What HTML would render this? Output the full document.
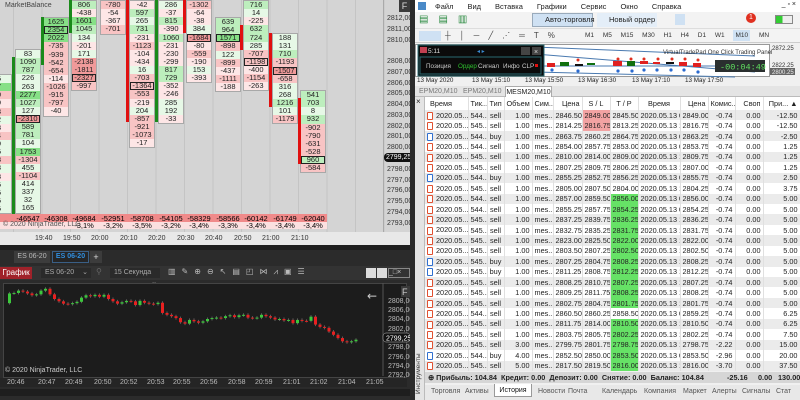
<!DOCTYPE html>
<html><head><meta charset="utf-8">
<style>
*{margin:0;padding:0;box-sizing:border-box}
body{width:800px;height:400px;overflow:hidden;background:#2b2b2b;font-family:"Liberation Sans",sans-serif;position:relative}
.a{position:absolute}
#fp{left:0;top:0;width:410px;height:245px;background:#d4d4d4;overflow:hidden;
background-image:repeating-linear-gradient(90deg,transparent 0,transparent 13px,#c4c4c4 13px,#c4c4c4 14px,transparent 14px,transparent 28.5px)}
.col{position:absolute;width:26px;border:1px solid #a8a8a8;font-size:7.5px;color:#222}
.col i{display:block;height:8.13px;line-height:8px;font-style:normal;text-align:center;white-space:nowrap;overflow:hidden}
.g3{background:#86e086}.g2{background:#bdeebd}.g1{background:#e6f8e6}
.r3{background:#f09a9a}.r2{background:#f8c4c4}.r1{background:#fde6e6}
.col i.b{outline:1.5px solid #222;outline-offset:-1.5px}
.bar{position:absolute;width:3px}
.pl{position:absolute;left:387px;font-size:7px;color:#333}
.tl{position:absolute;top:235px;font-size:7px;color:#333}
.sr{position:absolute;font-size:7.5px;text-align:center;width:28px}
#rt{left:415px;top:0;width:385px;height:400px;background:#f0f0f0;font-size:7.5px;color:#222}
table{border-collapse:collapse;table-layout:fixed;font-size:7.3px}
td{height:10.45px;padding:0 2px;white-space:nowrap;overflow:hidden;text-align:right;border-right:1px solid #e0e0e0}
tr:nth-child(odd) td{background:#fff}
tr:nth-child(even) td{background:#ebebeb}
td.l{text-align:left}
td.c{text-align:center}
td.gs{background:#66e266!important}
td.rs{background:#f2a2a2!important}
.ic{display:inline-block;width:6px;height:8px;border:1px solid #e05030;border-radius:1px;vertical-align:middle;margin-right:3px;background:#fff}
.ic.bu{border-color:#3070d0}
.mn span{margin-right:14px}
.tb{position:absolute;font-size:7px;color:#333}
.nw{white-space:nowrap}
</style></head><body>

<div id="fp" class="a">
<div class="a" style="left:5px;top:2px;font-size:7px;color:#444">MarketBalance</div>
<div class="a" style="left:399px;top:0;width:11px;height:12px;background:#3a3a3a;color:#ddd;font-size:9px;text-align:center;line-height:12px">F</div>
<div class="a" style="left:383px;top:0;width:1px;height:232px;background:#aaa"></div>

<div class="col" style="left:-14px;top:74px"><i class="g1">5</i><i class="g3">7</i><i class="r2">0</i><i class="r1">9</i><i class="r2">3</i><i class="g1">2</i><i class="r1">8</i><i class="r2">4</i><i class="g1">9</i><i class="g1">5</i><i class="r2">8</i><i class="g1">3</i><i class="r1">8</i><i class="g1">5</i><i class="g1">5</i><i class="g1">5</i><i class="g1">5</i></div>

<div class="col" style="left:15px;top:49px"><i class="g1">83</i><i class="g2">1090</i><i class="g2">787</i><i class="g1">226</i><i class="g1">263</i><i class="g3">2277</i><i class="g2">1027</i><i class="g1">127</i><i class="r3 b">-2310</i><i class="g2">589</i><i class="g2">781</i><i class="g1">104</i><i class="g3">1753</i><i class="r2">-1304</i><i class="g1">455</i><i class="r2">-1104</i><i class="g1">414</i><i class="g1">337</i><i class="g1">32</i><i class="g1">165</i></div>
<div class="col" style="left:43px;top:17px"><i class="g3">1625</i><i class="g3 b">2354</i><i class="g3">2022</i><i class="r2">-735</i><i class="r2">-939</i><i class="r2">-542</i><i class="r2">-654</i><i class="r1">-114</i><i class="r2">-1026</i><i class="r2">-915</i><i class="r2">-797</i><i class="r1">-40</i></div>
<div class="col" style="left:71px;top:0px"><i class="g2">806</i><i class="r1">-438</i><i class="g3">1601</i><i class="g2">1045</i><i class="g1">134</i><i class="r1">-201</i><i class="g1">171</i><i class="r3">-2138</i><i class="r3">-1811</i><i class="r3 b">-2327</i><i class="r2">-997</i></div>
<div class="col" style="left:100px;top:0px"><i class="r2">-780</i><i class="r1">-54</i><i class="r1">-367</i><i class="r2">-701</i></div>
<div class="col" style="left:129px;top:0px"><i class="r1">-42</i><i class="g2">597</i><i class="g1">265</i><i class="g2">731</i><i class="r1">-231</i><i class="r2">-1123</i><i class="r1">-104</i><i class="r1">-434</i><i class="g1">16</i><i class="r2">-703</i><i class="r2 b">-1364</i><i class="r2">-553</i><i class="r1">-219</i><i class="g1">204</i><i class="r2">-857</i><i class="r2">-921</i><i class="r2">-1073</i><i class="r1">-17</i></div>
<div class="col" style="left:158px;top:0px"><i class="g1">286</i><i class="r1">-37</i><i class="g2">815</i><i class="r1">-390</i><i class="g2">1060</i><i class="r1">-231</i><i class="r1">-230</i><i class="r1">-299</i><i class="g2">817</i><i class="g2">729</i><i class="r1">-352</i><i class="r1">-246</i><i class="g1">285</i><i class="g1">192</i><i class="r1">-33</i></div>
<div class="col" style="left:186px;top:0px"><i class="r2">-1302</i><i class="r1">-64</i><i class="r1">-38</i><i class="g1">384</i><i class="r3 b">-1684</i><i class="r1">-80</i><i class="r2">-559</i><i class="r1">-190</i><i class="g1">153</i><i class="r1">-393</i></div>
<div class="col" style="left:215px;top:17px"><i class="g2">639</i><i class="g2">964</i><i class="g3 b">1571</i><i class="r2">-898</i><i class="g1">122</i><i class="r2">-899</i><i class="r1">-437</i><i class="r2">-1111</i><i class="r1">-188</i></div>
<div class="col" style="left:243px;top:0px"><i class="g2">716</i><i class="g1">14</i><i class="r1">-225</i><i class="g2">632</i><i class="g2">724</i><i class="g1">285</i><i class="r2">-707</i><i class="r2 b">-1198</i><i class="r1">-400</i><i class="r2">-1154</i><i class="r1">-263</i></div>
<div class="col" style="left:272px;top:33px"><i class="g1">188</i><i class="g1">131</i><i class="g2">710</i><i class="r2">-1193</i><i class="r3 b">-1507</i><i class="r2">-658</i><i class="g1">316</i><i class="g1">268</i><i class="g2">1216</i><i class="g1">101</i><i class="r2">-1179</i></div>
<div class="col" style="left:300px;top:90px"><i class="g2">541</i><i class="g2">703</i><i class="g1">8</i><i class="g2">932</i><i class="r2">-902</i><i class="r2">-790</i><i class="r2">-631</i><i class="r2">-528</i><i class="g2 b">960</i><i class="r2">-584</i></div>

<div class="bar" style="left:12px;top:57px;height:157px;background:#1a8a1a"></div>
<div class="bar" style="left:41px;top:17px;height:48px;background:#1a8a1a"></div>
<div class="bar" style="left:69px;top:0;height:33px;background:#1a8a1a"></div>
<div class="bar" style="left:126px;top:0;height:122px;background:#e01010"></div>
<div class="bar" style="left:155px;top:0;height:122px;background:#1a8a1a"></div>
<div class="bar" style="left:183px;top:0;height:33px;background:#e01010"></div>
<div class="bar" style="left:240px;top:25px;height:25px;background:#e01010"></div>
<div class="bar" style="left:269px;top:33px;height:74px;background:#e01010"></div>
<div class="bar" style="left:298px;top:98px;height:66px;background:#e01010"></div>

<div class="a" style="left:0;top:214px;width:327px;height:8px;background:#f08a8a"></div>
<div class="a" style="left:0;top:222px;width:327px;height:7px;background:#fbe0e0"></div>
<div class="sr" style="left:14px;top:214px">-46547</div><div class="sr" style="left:42px;top:214px">-46308</div><div class="sr" style="left:70px;top:214px">-49684</div><div class="sr" style="left:99px;top:214px">-52951</div><div class="sr" style="left:128px;top:214px">-58708</div><div class="sr" style="left:157px;top:214px">-54105</div><div class="sr" style="left:185px;top:214px">-58329</div><div class="sr" style="left:214px;top:214px">-58566</div><div class="sr" style="left:242px;top:214px">-60142</div><div class="sr" style="left:271px;top:214px">-61749</div><div class="sr" style="left:299px;top:214px">-62040</div>
<div class="sr" style="left:70px;top:221px">-3,1%</div><div class="sr" style="left:99px;top:221px">-3,2%</div><div class="sr" style="left:128px;top:221px">-3,5%</div><div class="sr" style="left:157px;top:221px">-3,2%</div><div class="sr" style="left:185px;top:221px">-3,4%</div><div class="sr" style="left:214px;top:221px">-3,3%</div><div class="sr" style="left:242px;top:221px">-3,4%</div><div class="sr" style="left:271px;top:221px">-3,4%</div><div class="sr" style="left:299px;top:221px">-3,4%</div>
<div class="a" style="left:3px;top:221px;font-size:7px;color:#555">© 2020 NinjaTrader, LLC</div>

<div class="pl" style="top:15px">2812,00</div><div class="pl" style="top:26px">2811,00</div><div class="pl" style="top:37px">2810,00</div><div class="pl" style="top:58px">2808,00</div><div class="pl" style="top:69px">2807,00</div><div class="pl" style="top:80px">2806,00</div><div class="pl" style="top:90px">2805,00</div><div class="pl" style="top:101px">2804,00</div><div class="pl" style="top:112px">2803,00</div><div class="pl" style="top:123px">2802,00</div><div class="pl" style="top:133px">2801,00</div><div class="pl" style="top:144px">2800,00</div><div class="pl" style="top:166px">2798,00</div><div class="pl" style="top:177px">2797,00</div><div class="pl" style="top:187px">2796,00</div><div class="pl" style="top:198px">2795,00</div><div class="pl" style="top:209px">2794,00</div><div class="pl" style="top:220px">2793,00</div>
<div class="a" style="left:384px;top:153px;width:26px;height:9px;background:#111;color:#fff;font-size:7px;line-height:9px;padding-left:2px;border-radius:4px 0 0 4px">2799,25</div>
<div class="a" style="left:0;top:232px;width:410px;height:13px;background:#e8e8e8"></div>
<div class="tl" style="left:35px">19:40</div><div class="tl" style="left:63px">19:50</div><div class="tl" style="left:91px">20:00</div><div class="tl" style="left:120px">20:10</div><div class="tl" style="left:148px">20:20</div><div class="tl" style="left:177px">20:30</div><div class="tl" style="left:205px">20:40</div><div class="tl" style="left:234px">20:50</div><div class="tl" style="left:262px">21:00</div><div class="tl" style="left:291px">21:10</div>
</div>

<div class="a" style="left:0;top:245px;width:410px;height:5px;background:#1e1e1e"></div>
<div class="a" style="left:14px;top:251px;width:36px;height:12px;background:#3c3c3c;color:#bbb;font-size:7px;line-height:12px;text-align:center">ES 06-20</div>
<div class="a" style="left:52px;top:251px;width:37px;height:12px;background:#252526;border:1px solid #3a5f86;color:#2f8ee0;font-size:7px;line-height:10px;text-align:center;font-weight:bold">ES 06-20</div>
<div class="a" style="left:90px;top:251px;width:12px;height:12px;background:#3c3c3c;color:#ddd;font-size:9px;line-height:12px;text-align:center">+</div>
<div class="a" style="left:0;top:266px;width:410px;height:14px;background:#333"></div>
<div class="a" style="left:0;top:267px;width:32px;height:12px;background:#a0222a;color:#fff;font-size:8px;line-height:12px;text-align:center">График</div>
<div class="a nw" style="left:41px;top:268px;width:50px;height:10px;background:#2a2a2a;color:#aaa;font-size:7px;line-height:10px;padding-left:4px">ES 06-20 <span style="float:right;margin-right:3px">⌄</span></div>
<div class="a" style="left:96px;top:267px;color:#666;font-size:8px">⚲</div>
<div class="a nw" style="left:110px;top:268px;width:50px;height:10px;background:#2a2a2a;color:#aaa;font-size:7px;line-height:10px;padding-left:4px">15 Секунда <span style="float:right;margin-right:3px">⌄</span></div>
<div class="a nw" style="left:168px;top:267px;color:#bbb;font-size:8px;letter-spacing:6px">▥✎⊕⊖↖▤◰⋈⩘▣☰</div>
<div class="a" style="left:366px;top:268px;width:10px;height:10px;background:#ddd"></div>
<div class="a" style="left:377px;top:268px;width:10px;height:10px;background:#ddd"></div>
<div class="a" style="left:388px;top:268px;width:22px;height:10px;color:#ccc;font-size:7px;border:1px solid #888">_□×</div>
<div class="a" style="left:3px;top:283px;width:404px;height:95px;background:#1c1c1c;border:1px solid #444"></div>
<svg class="a" style="left:0;top:283px" width="410" height="100" id="cs">
<line x1="383" y1="0" x2="383" y2="93" stroke="#555"/>
<g fill="#bbb" font-size="7" font-family="Liberation Sans">
<text x="388" y="20">2808,00</text><text x="388" y="29">2806,00</text><text x="388" y="38">2804,00</text><text x="388" y="48">2802,00</text><text x="388" y="66">2798,00</text><text x="388" y="76">2796,00</text><text x="388" y="85">2794,00</text><text x="388" y="94">2792,00</text>
<text x="5" y="89" fill="#ccc">© 2020 NinjaTrader, LLC</text>
</g>
<rect x="401" y="3" width="9" height="11" fill="#3a3a3a"/><text x="402" y="12" fill="#ccc" font-size="9" font-family="Liberation Sans">F</text>
<text x="367" y="17" fill="#ccc" font-size="12" font-family="DejaVu Sans">←</text>
<rect x="383" y="50" width="27" height="9" rx="3" fill="#111" stroke="#bbb" stroke-width=".5"/><text x="386" y="57.5" fill="#fff" font-size="7" font-family="Liberation Sans">2799,25</text>
</svg>
<div class="a" style="left:0;top:378px;width:407px;height:9px;background:#252525;color:#bbb;font-size:7px">
<span class="a" style="left:7px;top:1px">20:46</span><span class="a" style="left:38px;top:1px">20:47</span><span class="a" style="left:65px;top:1px">20:49</span><span class="a" style="left:94px;top:1px">20:50</span><span class="a" style="left:120px;top:1px">20:52</span><span class="a" style="left:147px;top:1px">20:53</span><span class="a" style="left:173px;top:1px">20:55</span><span class="a" style="left:200px;top:1px">20:56</span><span class="a" style="left:228px;top:1px">20:58</span><span class="a" style="left:255px;top:1px">20:59</span><span class="a" style="left:283px;top:1px">21:01</span><span class="a" style="left:310px;top:1px">21:02</span><span class="a" style="left:338px;top:1px">21:04</span><span class="a" style="left:366px;top:1px">21:05</span></div>
<div class="a" style="left:0;top:389px;width:410px;height:7px;background:#1e1e1e"></div>
<div class="a" style="left:410px;top:0;width:5px;height:400px;background:#2b2b2b"></div>

<div id="rt" class="a">
<div class="a mn nw" style="left:0;top:0;width:385px;height:12px;background:#fff;padding:2px 0 0 20px;font-size:7.5px"><span>Файл</span><span>Вид</span><span>Вставка</span><span>Графики</span><span>Сервис</span><span>Окно</span><span>Справка</span><b style="position:absolute;right:4px;top:1px;font-weight:normal;font-size:7px">_ ▫ ×</b></div>
<div class="a" style="left:3px;top:2px;width:8px;height:8px;background:#4a8ac8"></div>
<div class="a" style="left:0;top:12px;width:385px;height:17px;background:#f3f3f3;border-bottom:1px solid #ddd"></div>
<div class="a nw" style="left:4px;top:14px;font-size:10px;color:#2a8a40;letter-spacing:10px">▤▤▥</div>
<div class="a nw" style="left:117px;top:13px;width:61px;height:14px;background:#cfe1f3;border:1px solid #9ab;font-size:7.5px;line-height:12px;padding-left:12px">Авто-торговля</div>
<div class="a nw" style="left:182px;top:13px;width:60px;height:14px;background:#e4eef8;font-size:7.5px;line-height:13px;padding-left:12px">Новый ордер</div>
<div class="a" style="left:260px;top:14px;width:10px;height:11px;background:#cfe1f3"></div>
<div class="a" style="left:331px;top:13px;width:10px;height:10px;border-radius:5px;background:#e03020;color:#fff;font-size:7px;text-align:center;line-height:10px">1</div>
<div class="a" style="left:360px;top:15px;width:18px;height:9px;border:1px solid #888;background:linear-gradient(90deg,#3c3 40%,#eee 40%)"></div>
<div class="a" style="left:0;top:29px;width:385px;height:14px;background:#f3f3f3;border-bottom:1px solid #ccc"></div>
<div class="a" style="left:4px;top:31px;width:22px;height:10px;background:#cfe1f3"></div>
<div class="a nw" style="left:30px;top:31px;font-size:8px;color:#444;letter-spacing:9px">┼│─╱⋰═T%</div>
<div class="a nw" style="left:170px;top:32px;font-size:6.5px;color:#333;word-spacing:7px">M1 M5 M15 M30 H1 H4 D1 W1 <span style="background:#cfe1f3;padding:2px">M10</span> MN</div>
<div class="a" style="left:0;top:44px;width:355px;height:33px;background:#fff;border:1px solid #999"></div>
<svg class="a" style="left:0;top:44px" width="385" height="34">
<line x1="120" y1="3" x2="340" y2="12" stroke="#4a7ab0"/><line x1="120" y1="10" x2="340" y2="28" stroke="#4a7ab0"/><line x1="120" y1="22" x2="340" y2="22" stroke="#4a7ab0"/><line x1="120" y1="28" x2="320" y2="33" stroke="#4a7ab0"/>
<g><rect x="132" y="19" width="8" height="4" fill="#e02020"/><rect x="145" y="18" width="9" height="4" fill="#107010"/><rect x="160" y="20" width="8" height="2" fill="#111"/><rect x="172" y="19" width="8" height="2" fill="#107010"/><rect x="198" y="17" width="9" height="5" fill="#e02020"/><rect x="212" y="17" width="8" height="5" fill="#107010"/><rect x="225" y="17" width="8" height="3" fill="#e02020"/><rect x="238" y="18" width="7" height="2" fill="#e02020"/><rect x="251" y="18" width="8" height="2" fill="#111"/><rect x="264" y="18" width="8" height="4" fill="#e02020"/><rect x="278" y="19" width="8" height="4" fill="#e02020"/>
<g fill="#2a6ad0"><circle cx="137" cy="26" r="1.6"/><circle cx="163" cy="27" r="1.6"/><circle cx="203" cy="27" r="1.6"/><circle cx="217" cy="27" r="1.6"/><circle cx="229" cy="26" r="1.6"/><circle cx="242" cy="26" r="1.6"/><circle cx="256" cy="26" r="1.6"/><circle cx="269" cy="26" r="1.6"/><circle cx="283" cy="28" r="1.6"/></g>
<g fill="#e03020"><circle cx="163" cy="16" r="1.5"/><circle cx="203" cy="15" r="1.5"/><circle cx="216" cy="15" r="1.5"/><circle cx="229" cy="15" r="1.5"/><circle cx="243" cy="15" r="1.5"/><circle cx="257" cy="15" r="1.5"/><circle cx="270" cy="15" r="1.5"/><circle cx="283" cy="16" r="1.5"/></g></g>
<rect x="3" y="1" width="126" height="31" fill="#0b0b0b" stroke="#2a6a70"/>
<rect x="5" y="13" width="121" height="17" fill="none" stroke="#2a6a70"/>
<rect x="5" y="3" width="7" height="6" fill="#c04050"/><text x="13" y="9" fill="#ddd" font-size="6.5" font-family="Liberation Sans">5:11</text>
<text x="62" y="9" fill="#3a8ad0" font-size="6">◂ ▸</text>
<rect x="106" y="3" width="9" height="8" fill="#444"/><rect x="117" y="3" width="9" height="8" fill="#444"/><text x="119" y="10" fill="#ddd" font-size="7">×</text>
<g font-size="6.3" font-family="Liberation Sans" fill="#ccc"><text x="11" y="24">Позиция</text><text x="43" y="24" fill="#2ec02e">Ордер</text><text x="63" y="24">Сигнал</text><text x="88" y="24">Инфо</text><text x="107" y="24">CLP</text></g>
<rect x="120" y="20" width="3" height="3" fill="#e01010"/>
<text x="248" y="10" fill="#333" font-size="6" font-family="Liberation Sans">VirtualTradePad One Click Trading Panel</text>
<rect x="300" y="16" width="50" height="12" fill="#2a2f2f"/><text x="305" y="25.5" fill="#60e060" font-size="8.5" font-family="Liberation Mono">-00:04:49</text>
<g fill="#333" font-size="6" font-family="Liberation Sans"><text x="357" y="6">2872.25</text><text x="357" y="23">2822.25</text></g>
<rect x="355" y="24" width="25" height="7" fill="#666"/><text x="357" y="30" fill="#eee" font-size="6">2800.25</text>
</svg>
<div class="a nw" style="left:0;top:77px;width:385px;height:8px;font-size:6.3px;color:#222">
<span class="a" style="left:2px">13 May 2020</span><span class="a" style="left:57px">13 May 15:10</span><span class="a" style="left:110px">13 May 15:50</span><span class="a" style="left:163px">13 May 16:30</span><span class="a" style="left:217px">13 May 17:10</span><span class="a" style="left:270px">13 May 17:50</span></div>
<div class="a" style="left:0;top:86px;width:385px;height:11px;background:#e4e4e4;border-bottom:1px solid #bbb"></div>
<div class="tb" style="left:4px;top:88px;color:#777">EPM20,M10</div><div class="tb" style="left:48px;top:88px;color:#777">EPM20,M10</div>
<div class="a" style="left:90px;top:86px;width:47px;height:12px;background:#fff;border:1px solid #aaa;border-bottom:none;font-size:7px;line-height:11px;text-align:center">MESM20,M10</div>
<div class="a" style="left:0;top:97px;width:10px;height:303px;background:#e4e4e4;border-right:1px solid #bbb"></div>
<div class="a" style="left:1px;top:97px;font-size:8px">×</div>
<div class="a nw" style="left:0;top:394px;transform-origin:0 0;transform:rotate(-90deg);font-size:6.5px;color:#333">Инструменты</div>
<table class="a" style="left:10px;top:97px;width:375px">
<colgroup><col style="width:43px"><col style="width:19px"><col style="width:17px"><col style="width:28px"><col style="width:21px"><col style="width:29px"><col style="width:28px"><col style="width:28px"><col style="width:42px"><col style="width:28px"><col style="width:27px"><col style="width:28px"><col style="width:37px"></colgroup>
<tbody>
<tr><td class="l" style="height:13px;background:#fff;padding-left:5px">Время</td><td class="l">Тик...</td><td class="l">Тип</td><td>Объем</td><td class="l">Сим...</td><td>Цена</td><td class="c">S / L</td><td class="c">T / P</td><td class="c">Время</td><td>Цена</td><td>Комис...</td><td>Своп</td><td>При... ▲</td></tr>
<tr><td class="l"><span class="ic"></span>2020.05...</td><td class="l">544...</td><td class="c">sell</td><td>1.00</td><td class="l">mes...</td><td>2846.50</td><td class="rs">2849.00</td><td>2845.50</td><td class="l">2020.05.13 0...</td><td>2849.00</td><td>-0.74</td><td>0.00</td><td>-12.50</td></tr>
<tr><td class="l"><span class="ic"></span>2020.05...</td><td class="l">545...</td><td class="c">sell</td><td>1.00</td><td class="l">mes...</td><td>2814.25</td><td class="rs">2816.75</td><td>2813.25</td><td class="l">2020.05.13 1...</td><td>2816.75</td><td>-0.74</td><td>0.00</td><td>-12.50</td></tr>
<tr><td class="l"><span class="ic bu"></span>2020.05...</td><td class="l">544...</td><td class="c">buy</td><td>1.00</td><td class="l">mes...</td><td>2863.75</td><td>2860.25</td><td>2864.75</td><td class="l">2020.05.13 0...</td><td>2863.25</td><td>-0.74</td><td>0.00</td><td>-2.50</td></tr>
<tr><td class="l"><span class="ic"></span>2020.05...</td><td class="l">544...</td><td class="c">sell</td><td>1.00</td><td class="l">mes...</td><td>2854.00</td><td>2857.75</td><td>2853.00</td><td class="l">2020.05.13 0...</td><td>2853.75</td><td>-0.74</td><td>0.00</td><td>1.25</td></tr>
<tr><td class="l"><span class="ic"></span>2020.05...</td><td class="l">545...</td><td class="c">sell</td><td>1.00</td><td class="l">mes...</td><td>2810.00</td><td>2814.00</td><td>2809.00</td><td class="l">2020.05.13 1...</td><td>2809.75</td><td>-0.74</td><td>0.00</td><td>1.25</td></tr>
<tr><td class="l"><span class="ic"></span>2020.05...</td><td class="l">545...</td><td class="c">sell</td><td>1.00</td><td class="l">mes...</td><td>2807.25</td><td>2809.75</td><td>2806.25</td><td class="l">2020.05.13 1...</td><td>2807.00</td><td>-0.74</td><td>0.00</td><td>1.25</td></tr>
<tr><td class="l"><span class="ic bu"></span>2020.05...</td><td class="l">544...</td><td class="c">buy</td><td>1.00</td><td class="l">mes...</td><td>2855.25</td><td>2852.75</td><td>2856.25</td><td class="l">2020.05.13 0...</td><td>2855.75</td><td>-0.74</td><td>0.00</td><td>2.50</td></tr>
<tr><td class="l"><span class="ic"></span>2020.05...</td><td class="l">545...</td><td class="c">sell</td><td>1.00</td><td class="l">mes...</td><td>2805.00</td><td>2807.50</td><td>2804.00</td><td class="l">2020.05.13 1...</td><td>2804.25</td><td>-0.74</td><td>0.00</td><td>3.75</td></tr>
<tr><td class="l"><span class="ic"></span>2020.05...</td><td class="l">544...</td><td class="c">sell</td><td>1.00</td><td class="l">mes...</td><td>2857.00</td><td>2859.50</td><td class="gs">2856.00</td><td class="l">2020.05.13 0...</td><td>2856.00</td><td>-0.74</td><td>0.00</td><td>5.00</td></tr>
<tr><td class="l"><span class="ic"></span>2020.05...</td><td class="l">544...</td><td class="c">sell</td><td>1.00</td><td class="l">mes...</td><td>2855.25</td><td>2857.75</td><td class="gs">2854.25</td><td class="l">2020.05.13 0...</td><td>2854.25</td><td>-0.74</td><td>0.00</td><td>5.00</td></tr>
<tr><td class="l"><span class="ic"></span>2020.05...</td><td class="l">545...</td><td class="c">sell</td><td>1.00</td><td class="l">mes...</td><td>2837.25</td><td>2839.75</td><td class="gs">2836.25</td><td class="l">2020.05.13 1...</td><td>2836.25</td><td>-0.74</td><td>0.00</td><td>5.00</td></tr>
<tr><td class="l"><span class="ic"></span>2020.05...</td><td class="l">545...</td><td class="c">sell</td><td>1.00</td><td class="l">mes...</td><td>2832.75</td><td>2835.25</td><td class="gs">2831.75</td><td class="l">2020.05.13 1...</td><td>2831.75</td><td>-0.74</td><td>0.00</td><td>5.00</td></tr>
<tr><td class="l"><span class="ic"></span>2020.05...</td><td class="l">545...</td><td class="c">sell</td><td>1.00</td><td class="l">mes...</td><td>2823.00</td><td>2825.50</td><td class="gs">2822.00</td><td class="l">2020.05.13 1...</td><td>2822.00</td><td>-0.74</td><td>0.00</td><td>5.00</td></tr>
<tr><td class="l"><span class="ic"></span>2020.05...</td><td class="l">545...</td><td class="c">sell</td><td>1.00</td><td class="l">mes...</td><td>2803.50</td><td>2807.25</td><td class="gs">2802.50</td><td class="l">2020.05.13 1...</td><td>2802.50</td><td>-0.74</td><td>0.00</td><td>5.00</td></tr>
<tr><td class="l"><span class="ic bu"></span>2020.05...</td><td class="l">545...</td><td class="c">buy</td><td>1.00</td><td class="l">mes...</td><td>2807.25</td><td>2804.75</td><td class="gs">2808.25</td><td class="l">2020.05.13 1...</td><td>2808.25</td><td>-0.74</td><td>0.00</td><td>5.00</td></tr>
<tr><td class="l"><span class="ic bu"></span>2020.05...</td><td class="l">545...</td><td class="c">buy</td><td>1.00</td><td class="l">mes...</td><td>2811.25</td><td>2808.75</td><td class="gs">2812.25</td><td class="l">2020.05.13 1...</td><td>2812.25</td><td>-0.74</td><td>0.00</td><td>5.00</td></tr>
<tr><td class="l"><span class="ic"></span>2020.05...</td><td class="l">545...</td><td class="c">sell</td><td>1.00</td><td class="l">mes...</td><td>2808.25</td><td>2810.75</td><td class="gs">2807.25</td><td class="l">2020.05.13 1...</td><td>2807.25</td><td>-0.74</td><td>0.00</td><td>5.00</td></tr>
<tr><td class="l"><span class="ic"></span>2020.05...</td><td class="l">545...</td><td class="c">sell</td><td>1.00</td><td class="l">mes...</td><td>2809.25</td><td>2811.75</td><td class="gs">2808.25</td><td class="l">2020.05.13 1...</td><td>2808.25</td><td>-0.74</td><td>0.00</td><td>5.00</td></tr>
<tr><td class="l"><span class="ic"></span>2020.05...</td><td class="l">545...</td><td class="c">sell</td><td>1.00</td><td class="l">mes...</td><td>2802.75</td><td>2804.75</td><td class="gs">2801.75</td><td class="l">2020.05.13 1...</td><td>2801.75</td><td>-0.74</td><td>0.00</td><td>5.00</td></tr>
<tr><td class="l"><span class="ic"></span>2020.05...</td><td class="l">544...</td><td class="c">sell</td><td>1.00</td><td class="l">mes...</td><td>2860.50</td><td>2860.25</td><td>2858.50</td><td class="l">2020.05.13 0...</td><td>2859.25</td><td>-0.74</td><td>0.00</td><td>6.25</td></tr>
<tr><td class="l"><span class="ic"></span>2020.05...</td><td class="l">545...</td><td class="c">sell</td><td>1.00</td><td class="l">mes...</td><td>2811.75</td><td>2814.00</td><td class="gs">2810.50</td><td class="l">2020.05.13 1...</td><td>2810.50</td><td>-0.74</td><td>0.00</td><td>6.25</td></tr>
<tr><td class="l"><span class="ic"></span>2020.05...</td><td class="l">545...</td><td class="c">sell</td><td>1.00</td><td class="l">mes...</td><td>2803.75</td><td>2805.75</td><td class="gs">2802.25</td><td class="l">2020.05.13 1...</td><td>2802.25</td><td>-0.74</td><td>0.00</td><td>7.50</td></tr>
<tr><td class="l"><span class="ic"></span>2020.05...</td><td class="l">545...</td><td class="c">sell</td><td>3.00</td><td class="l">mes...</td><td>2799.75</td><td>2801.75</td><td class="gs">2798.75</td><td class="l">2020.05.13 1...</td><td>2798.75</td><td>-2.22</td><td>0.00</td><td>15.00</td></tr>
<tr><td class="l"><span class="ic bu"></span>2020.05...</td><td class="l">544...</td><td class="c">buy</td><td>4.00</td><td class="l">mes...</td><td>2852.50</td><td>2850.00</td><td class="gs">2853.50</td><td class="l">2020.05.13 0...</td><td>2853.50</td><td>-2.96</td><td>0.00</td><td>20.00</td></tr>
<tr><td class="l"><span class="ic"></span>2020.05...</td><td class="l">545...</td><td class="c">sell</td><td>5.00</td><td class="l">mes...</td><td>2817.50</td><td>2819.50</td><td class="gs">2816.00</td><td class="l">2020.05.13 1...</td><td>2816.00</td><td>-3.70</td><td>0.00</td><td>37.50</td></tr>
</tbody></table>
<div class="a nw" style="left:10px;top:372px;width:375px;height:11px;background:#d6d6d6;font-size:7.3px;font-weight:bold;line-height:11px;padding-left:3px">⊕ Прибыль: 104.84 &nbsp;Кредит: 0.00 &nbsp;Депозит: 0.00 &nbsp;Снятие: 0.00 &nbsp;Баланс: 104.84
<span class="a" style="left:302px">-25.16</span><span class="a" style="left:333px">0.00</span><span class="a" style="left:353px">130.00</span></div>
<div class="a nw" style="left:10px;top:385px;width:375px;height:15px;background:#e8e8e8;font-size:7px;color:#555;line-height:13px">
<span class="a" style="left:6px">Торговля</span><span class="a" style="left:40px">Активы</span>
<span class="a" style="left:69px;top:-1px;width:38px;height:13px;background:#fff;border:1px solid #999;border-top:none;text-align:center;color:#111">История</span>
<span class="a" style="left:113px">Новости</span><span class="a" style="left:143px">Почта</span><span class="a" style="left:177px">Календарь</span><span class="a" style="left:219px">Компания</span><span class="a" style="left:258px">Маркет</span><span class="a" style="left:287px">Алерты</span><span class="a" style="left:317px">Сигналы</span><span class="a" style="left:351px">Стат</span></div>
</div>

<script>
var c=[2807.1,2809.2,2809.3,2809.8,2809.6,2809.2,2808.8,2809.0,2809.8,2810.2,2809.0,2808.0,2807.5,2807.0,2806.9,2807.1,2807.4,2808.3,2808.8,2808.6,2808.9,2808.5,2808.9,2808.0,2807.5,2807.0,2807.3,2807.6,2807.5,2806.7,2807.6,2807.2,2807.0,2806.9,2807.2,2805.0,2804.6,2804.3,2803.9,2803.0,2802.7,2803.5,2803.2,2802.9,2803.2,2803.7,2803.9,2804.0,2803.9,2804.3,2804.5,2804.1,2804.5,2804.6,2804.0,2803.9,2804.0,2804.6,2804.3,2804.0,2803.6,2803.7,2803.4,2803.5,2802.8,2803.5,2803.3,2803.3,2804.2,2802.5,2802.0,2801.8,2801.0,2800.3,2799.6,2798.9,2798.7,2798.9,2799.25];
var s=document.getElementById('cs'),h='';
function Y(p){return 16-(p-2808)*4.65;}
for(var i=1;i<c.length;i++){var o=c[i-1],cl=c[i],x=8+(i-1)*4.5;var t=Y(Math.max(o,cl)),b=Y(Math.min(o,cl));
h+='<line x1="'+(x+1.5)+'" x2="'+(x+1.5)+'" y1="'+(t-1.5)+'" y2="'+(b+1.5)+'" stroke="#888" stroke-width=".6"/>';
h+='<rect x="'+x+'" y="'+t+'" width="3" height="'+Math.max(b-t,1)+'" fill="'+(cl>o?'#3cc83c':'#e82020')+'"/>';}
s.insertAdjacentHTML('beforeend',h);
</script>
</body></html>
